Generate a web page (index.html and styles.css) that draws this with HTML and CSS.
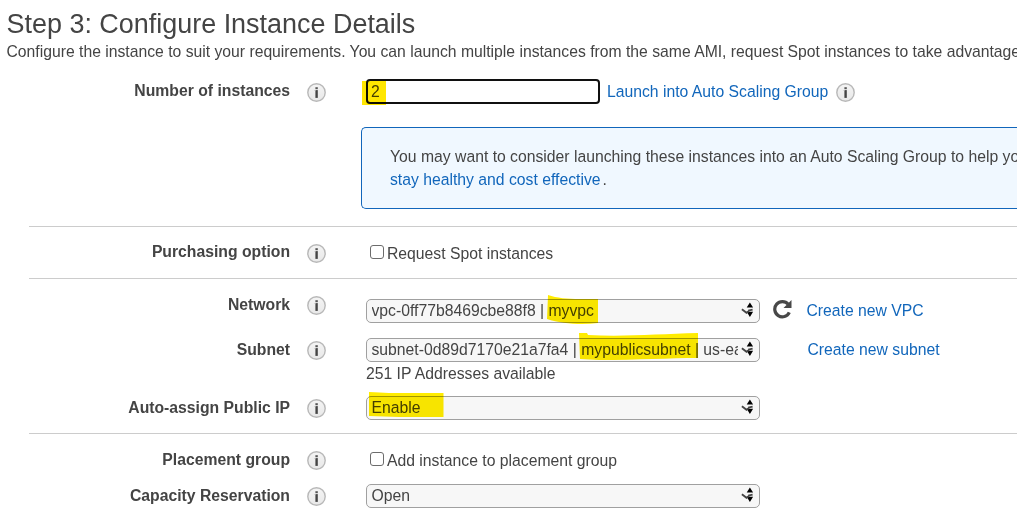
FILE: index.html
```html
<!DOCTYPE html>
<html lang="en">
<head>
<meta charset="utf-8">
<title>Step 3: Configure Instance Details</title>
<link rel="stylesheet" href="styles.css">
</head>
<body>
<svg class="defs" aria-hidden="true">
  <defs>
    <linearGradient id="face" x1="0" y1="0" x2="0" y2="1"><stop offset="0" stop-color="#f4f4f4"/><stop offset="1" stop-color="#e8e8e8"/></linearGradient>
    <symbol id="info" viewBox="0 0 19 19">
      <circle cx="9.5" cy="9.5" r="8.7" fill="url(#face)" stroke="#b8b8b8" stroke-width="1.4"/>
      <path d="M8.4 4.2h2.4v2H8.4z" fill="#555"/>
      <path d="M8.4 7.1h2.4v7.8H8.4z" fill="#444"/>
      <path d="M7.6 7.1h.8v1h-.8z" fill="#bbb"/>
    </symbol>
    <symbol id="arrows" viewBox="0 0 14 16">
      <path d="M8.9 .4l3.2 5.2H5.700zM5.700 9.800h6.400l-3.2 5.200z" fill="#000"/>
      <path d="M.9 7.200l4.600 3.600L8 9M7.200 8.600L11.600 7.600" fill="none" stroke="#444" stroke-width="1.800"/>
    </symbol>
  </defs>
</svg>
<main class="page">
  <header class="head">
    <h1 class="title">Step 3: Configure Instance Details</h1>
    <p class="intro">Configure the instance to suit your requirements. You can launch multiple instances from the same AMI, request Spot instances to take advantage</p>
  </header>

  <section class="row count">
    <label class="label">Number of instances</label>
    <svg class="info"><use href="#info"/></svg>
    <div class="control">
      <div class="field"><div class="input">2</div><i class="mark mark-count"></i></div>
      <a class="link">Launch into Auto Scaling Group</a>
      <svg class="info"><use href="#info"/></svg>
    </div>
  </section>
  <aside class="notice">
    <p>You may want to consider launching these instances into an Auto Scaling Group to help you</p>
    <p><a class="link">stay healthy and cost effective</a><span class="stop">.</span></p>
  </aside>

  <section class="row ruled purchase">
    <label class="label">Purchasing option</label>
    <svg class="info"><use href="#info"/></svg>
    <div class="control"><i class="check"></i><span class="option">Request Spot instances</span></div>
  </section>

  <section class="row ruled network">
    <label class="label">Network</label>
    <svg class="info"><use href="#info"/></svg>
    <div class="control">
      <div class="field"><div class="select"><span class="value">vpc-0ff77b8469cbe88f8 | myvpc</span><svg class="arrows"><use href="#arrows"/></svg></div>
        <svg class="mark mark-vpc" viewBox="0 0 52 30"><path d="M1 0C10 3 20 4 33 4H51V28C35 30 15 29 0 24Z"/></svg></div>
      <svg class="refresh" viewBox="0 0 20 20"><path d="M16.2 5.3A7.6 7.6 0 1 0 17.3 13.3" fill="none" stroke="#484848" stroke-width="3.2"/><path d="M19.5 1v8h-8z" fill="#484848"/></svg>
      <a class="link">Create new VPC</a>
    </div>
  </section>

  <section class="row subnet">
    <label class="label">Subnet</label>
    <svg class="info"><use href="#info"/></svg>
    <div class="stack">
      <div class="control">
        <div class="field"><div class="select"><span class="value">subnet-0d89d7170e21a7fa4 | mypublicsubnet | us-ea</span><svg class="arrows"><use href="#arrows"/></svg></div>
          <svg class="mark mark-subnet" viewBox="0 0 120 28"><path d="M0 0H8L9 2C45 4 80 1 119 0V25C90 25 60 27 20 27L1 26Z"/></svg></div>
        <a class="link">Create new subnet</a>
      </div>
      <p class="hint">251 IP Addresses available</p>
    </div>
  </section>

  <section class="row public-ip">
    <label class="label">Auto-assign Public IP</label>
    <svg class="info"><use href="#info"/></svg>
    <div class="control"><div class="field"><div class="select"><span class="value">Enable</span><svg class="arrows"><use href="#arrows"/></svg></div>
      <svg class="mark mark-enable" viewBox="0 0 75 26"><path d="M0 0C15 1 25 1 38 1H74.500V25H30L0 24Z"/></svg></div></div>
  </section>

  <section class="row ruled placement">
    <label class="label">Placement group</label>
    <svg class="info"><use href="#info"/></svg>
    <div class="control"><i class="check"></i><span class="option">Add instance to placement group</span></div>
  </section>

  <section class="row capacity">
    <label class="label">Capacity Reservation</label>
    <svg class="info"><use href="#info"/></svg>
    <div class="control"><div class="field"><div class="select"><span class="value">Open</span><svg class="arrows"><use href="#arrows"/></svg></div></div></div>
  </section>
</main>
</body>
</html>
```
FILE: styles.css
```css
* { box-sizing: border-box; }
body {
  margin: 0;
  background: #fff;
  color: #444;
  font: 15.74px/20px "Liberation Sans", Arial, sans-serif;
  overflow: hidden;
}
p, h1 { margin: 0; }
svg { display: block; flex: none; }
.defs { position: absolute; width: 0; height: 0; }
.page { width: 1017px; height: 512px; overflow: hidden; }

.head { height: 72px; padding: 6px 0 0 6.5px; white-space: nowrap; }
.title { font-size: 26.95px; font-weight: 400; line-height: 36px; }
.intro { font-size: 15.72px; line-height: 20px; }

.row {
  display: grid;
  grid-template-columns: 261px 19px 1fr;
  column-gap: 17px;
  align-items: start;
  margin-left: 29px;
}
.row > .control, .row > .stack { margin-left: 23px; }
.ruled { border-top: 1px solid #ccc; }
.label { font-weight: 700; text-align: right; white-space: nowrap; }
.info { width: 19px; height: 19px; margin-top: 2px; }
.control { display: flex; align-items: center; white-space: nowrap; }
.link { color: #1166bb; }
.field { position: relative; }

.count { height: 55px; padding-top: 9px; }
.count > .control { margin-top: -2px; }
.count .control .link { margin-left: 7px; }
.count .control .info { margin: 1px 0 0 8px; }
.input {
  width: 234px;
  height: 25px;
  padding: 0 3px;
  border: 2px solid #101010;
  border-radius: 4px;
  line-height: 22px;
}

.notice {
  height: 82px;
  margin: 0 0 17px 361px;
  padding: 17px 0 0 28px;
  border: 1px solid #1166bb;
  border-right: 0;
  border-radius: 5px 0 0 5px;
  background: #f0f8ff;
  line-height: 23px;
  white-space: nowrap;
}
.stop { margin-left: 2px; }

.check {
  width: 14px;
  height: 14px;
  margin: -2px 3px 0 4px;
  border: 1px solid #6c6c6c;
  border-radius: 3px;
}
.option { position: relative; top: 1px; }

.select {
  display: flex;
  justify-content: space-between;
  width: 394px;
  height: 24px;
  padding: 0 4px 0 4.5px;
  border: 1px solid #a0a0a0;
  border-radius: 5px;
  background: #f7f7f7;
  line-height: 22px;
}
.value { width: 366px; overflow: hidden; }
.arrows { width: 14px; height: 16px; margin-top: 2px; }

.purchase { height: 52px; padding-top: 15px; }
.purchase > .info { margin-top: 1.5px; }
.purchase > .control { margin-top: 1px; }
.network { height: 55px; padding-top: 16px; }
.network > .info { margin-top: 1px; }
.network > .control { margin-top: 4px; }
.refresh { width: 20px; height: 20px; margin: -4px 14.5px 0 12px; }
.subnet { height: 58px; padding-top: 7px; }
.subnet > .info, .public-ip > .info { margin-top: 1px; }
.subnet > .stack { margin-top: -2px; }
.subnet .link { margin-left: 47.5px; }
.hint { margin-top: 2px; }
.public-ip { height: 42px; padding-top: 7px; }
.public-ip > .control { margin-top: -2px; }
.placement { height: 45px; padding-top: 16px; }
.placement > .info, .capacity > .info { margin-top: 1px; }
.capacity { height: 34px; padding-top: 8px; }
.capacity > .control { margin-top: -2px; }

/* Highlighter strokes laid over field values */
.mark { position: absolute; fill: #ffec00; mix-blend-mode: multiply; }
.mark-count { left: -4px; top: 2px; width: 24px; height: 24px; background: #ffe600; }
.mark-vpc { left: 181px; top: -4px; width: 52px; height: 30px; }
.mark-subnet { left: 213px; top: -5px; width: 120px; height: 28px; }
.mark-enable { left: 3px; top: -4px; width: 75px; height: 26px; }
```
